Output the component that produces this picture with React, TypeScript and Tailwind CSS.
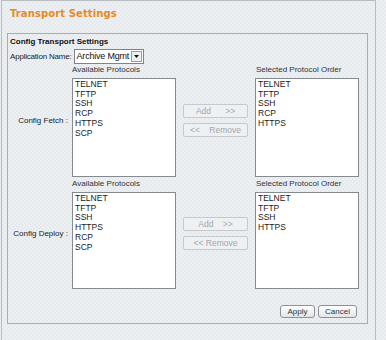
import React from "react";

const fetchAvail = ["TELNET", "TFTP", "SSH", "RCP", "HTTPS", "SCP"];
const fetchSel = ["TELNET", "TFTP", "SSH", "RCP", "HTTPS"];
const deployAvail = ["TELNET", "TFTP", "SSH", "HTTPS", "RCP", "SCP"];
const deploySel = ["TELNET", "TFTP", "SSH", "HTTPS"];

function ListBox({ items, height }: { items: string[]; height: string }) {
  return (
    <div className={`w-[104px] ${height} border border-[#858a8f] bg-white px-[2px] py-[1px]`}>
      {items.map((p) => (
        <div key={p} className="text-[8.5px] leading-[9.7px] text-[#1a1a1a]">
          {p}
        </div>
      ))}
    </div>
  );
}

function MoveButtons({ addText, removeText }: { addText: string; removeText: string }) {
  return (
    <div className="flex w-[65px] flex-col gap-[5px]">
      <div className="flex h-[14px] items-center justify-center whitespace-pre rounded-[2px] border border-[#c6cacd] bg-[#eef1f3] text-[8.5px] text-[#a3a7ab]">
        {addText}
      </div>
      <div className="flex h-[14px] items-center justify-center whitespace-pre rounded-[2px] border border-[#c6cacd] bg-[#eef1f3] text-[8.5px] text-[#a3a7ab]">
        {removeText}
      </div>
    </div>
  );
}

function ConfigRow({
  label,
  avail,
  sel,
  listH,
  addText,
  removeText,
}: {
  label: string;
  avail: string[];
  sel: string[];
  listH: string;
  addText: string;
  removeText: string;
}) {
  return (
    <div className="flex items-center">
      <div className="w-[64px] pr-[4px] text-right text-[8px] text-[#222]">{label}</div>
      <div className="flex flex-col">
        <div className="h-[14px] text-[8px] leading-[11px] text-[#333]">Available Protocols</div>
        <ListBox items={avail} height={listH} />
      </div>
      <div className="mx-[7px]">
        <MoveButtons addText={addText} removeText={removeText} />
      </div>
      <div className="flex flex-col">
        <div className="h-[14px] pl-[1px] text-[8px] leading-[11px] text-[#333]">Selected Protocol Order</div>
        <ListBox items={sel} height={listH} />
      </div>
    </div>
  );
}

export default function App() {
  return (
    <div
      className="h-[340px] w-[386px] overflow-hidden bg-[#e9edef] bg-[repeating-conic-gradient(#e6eaec_0_25%,#edf0f2_0_50%)] bg-[length:4px_4px]"
      style={{ fontFamily: '"Liberation Sans", Arial, sans-serif' }}
    >
      <div className="ml-[1px] h-[340px] w-[375px] border-l border-r border-t border-[#b9bdc0] pl-[5px]">
        <div
          className="h-[32px] pl-[3px] pt-[5px] text-[10px] font-bold tracking-[0.1px] text-[#e58a25]"
          style={{ fontFamily: '"DejaVu Sans", Verdana, sans-serif' }}
        >
          Transport Settings
        </div>
        <div className="h-[291px] w-[361px] border border-[#a9adb1] pt-[3px]">
          <div className="pl-[2px] text-[8px] font-bold leading-[10px] text-[#111]">Config Transport Settings</div>
          <div className="mt-[2px] flex items-center pl-[2px]">
            <span className="text-[8px] tracking-[-0.2px] text-[#222]">Application Name:</span>
            <div className="ml-[2px] flex h-[15px] w-[70px] items-center justify-between border border-[#7f8489] bg-white pl-[2px] pr-[1px]">
              <span className="whitespace-nowrap text-[9px] leading-none tracking-[-0.2px] text-[#111]">Archive Mgmt</span>
              <span className="flex h-[11px] w-[11px] shrink-0 items-center justify-center border border-[#9a9ea2] bg-[#eceeef]">
                <svg width="5" height="3" viewBox="0 0 5 3">
                  <path d="M0 0h5L2.5 3z" fill="#111" />
                </svg>
              </span>
            </div>
          </div>
          <ConfigRow
            label="Config Fetch :"
            avail={fetchAvail}
            sel={fetchSel}
            listH="h-[99px]"
            addText={"Add      >>"}
            removeText={"<<    Remove"}
          />
          <div className="mt-[1px]">
            <ConfigRow
              label="Config Deploy :"
              avail={deployAvail}
              sel={deploySel}
              listH="h-[97px]"
              addText={"Add    >>"}
              removeText={"<< Remove"}
            />
          </div>
          <div className="mt-[16px] flex justify-end gap-[3px] pr-[10px]">
            <button className="h-[13px] w-[35px] rounded-[3px] border border-[#8e9296] bg-gradient-to-b from-[#ffffff] to-[#e2e5e7] text-[8px] leading-none text-[#333]">
              Apply
            </button>
            <button className="h-[13px] w-[39px] rounded-[3px] border border-[#8e9296] bg-gradient-to-b from-[#ffffff] to-[#e2e5e7] text-[8px] leading-none text-[#333]">
              Cancel
            </button>
          </div>
        </div>
      </div>
    </div>
  );
}
